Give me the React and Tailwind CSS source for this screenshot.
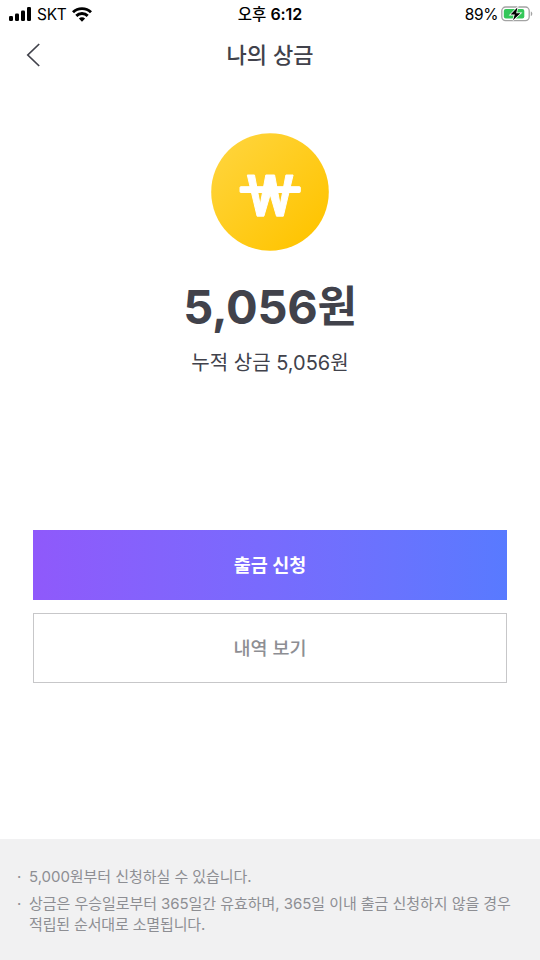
const FONT = "font-['Inter','Noto_Sans_CJK_KR',sans-serif]";

function StatusBar() {
  return (
    <header className="grid h-7 grid-cols-3 items-center text-[16px] leading-7 text-black">
      <div className="flex items-center pl-2">
        <svg className="-mt-px" width="24" height="14" viewBox="0 0 24 14" fill="#000">
          <rect x="1" y="9" width="4" height="5" rx="1.2" />
          <rect x="7" y="6.5" width="4" height="7.5" rx="1.2" />
          <rect x="13" y="3.5" width="4" height="10.5" rx="1.2" />
          <rect x="19" y="0" width="4" height="14" rx="1.2" />
        </svg>
        <span className="ml-[5px] w-[30px] whitespace-nowrap text-[15.5px] tracking-[-0.3px]">SKT</span>
        <svg className="-mt-px ml-[5px]" width="20" height="15" viewBox="0 0 20 15" fill="none" stroke="#000" strokeWidth="2.9">
          <path d="M1 5.3a12.8 12.8 0 0 1 18 0" />
          <path d="M4.3 8.9a8.1 8.1 0 0 1 11.4 0" />
          <path d="M10 14.7 6.9 11.6a4.4 4.4 0 0 1 6.2 0z" fill="#000" stroke="none" />
        </svg>
      </div>
      <div className="whitespace-nowrap text-center text-[15.5px] font-medium">오후 <span className="text-[16px] font-semibold tracking-[-0.1px]">6:12</span></div>
      <div className="flex items-center justify-end pr-[7px]">
        <span className="mr-[3px] whitespace-nowrap text-[15.5px] tracking-[-0.4px]">89%</span>
        <svg className="-mt-px" width="32" height="16" viewBox="0 0 32 16">
          <rect x="0.8" y="1" width="27.4" height="13.6" rx="3.8" fill="#fff" stroke="#a3a3a3" strokeWidth="1.3" />
          <rect x="2.8" y="3" width="20.5" height="9.6" rx="2" fill="#34c759" />
          <path d="M29.8 5.5c2 .7 2 3.9 0 4.6z" fill="#a3a3a3" />
          <path d="M16.4 1.6 9.6 8.6h4.2L12 14.2l7.4-7H15.2z" fill="#000" stroke="#fff" strokeWidth="1.6" paintOrder="stroke" />
        </svg>
      </div>
    </header>
  );
}

function WonCoin() {
  return (
    <svg className="mx-auto block" width="118" height="118" viewBox="0 0 118 118">
      <defs>
        <linearGradient id="coin" x1="0" y1="0" x2="1" y2="1">
          <stop offset="0.1" stopColor="#ffd43a" />
          <stop offset="0.9" stopColor="#ffc400" />
        </linearGradient>
      </defs>
      <circle cx="59" cy="59" r="58.8" fill="url(#coin)" />
      <g fill="#fff" stroke="#fff" strokeWidth="1" strokeLinejoin="round">
        <path d="M36.3 42h7.2L49.2 72 54.8 42h8.8L69.2 72 74.9 42h7.2L72.3 83.2h-6.8L59.2 61.5l-6.3 21.7h-6.8z" />
        <rect x="29" y="53.7" width="60.3" height="5.8" rx="0.8" />
      </g>
    </svg>
  );
}

export default function App() {
  return (
    <div className={`flex h-[960px] w-[540px] flex-col overflow-hidden bg-white text-[#41424b] ${FONT}`}>
      <StatusBar />
      <nav className="grid h-[54px] grid-cols-[80px_1fr_80px] items-center">
        <svg className="ml-[26px]" width="15" height="24" viewBox="0 0 15 24" fill="none" stroke="#41424b" strokeWidth="1.7">
          <path d="M13.2 1 1.8 12l11.4 11" />
        </svg>
        <h1 className="text-center text-[22px] font-medium leading-[54px]">나의 상금</h1>
      </nav>
      <main className="flex flex-1 flex-col pt-[51px]">
        <WonCoin />
        <p className="mt-[26px] h-[60px] whitespace-nowrap text-center text-[47px] font-bold leading-[60px] tracking-[-0.3px]">
          5,056<span className="align-[2px] text-[43px] leading-none">원</span>
        </p>
        <p className="mt-[11px] whitespace-nowrap text-center text-[20px] leading-[30px]">누적 상금 5,056원</p>
        <div className="mt-[152px] flex flex-col gap-[13px] px-[33px]">
          <button className="h-[70px] bg-linear-to-r from-[#8f59fb] to-[#587aff] pt-px text-[18.5px] font-bold text-white">출금 신청</button>
          <button className="h-[70px] border border-[#c7c7c9] bg-white pt-px text-[18.5px] font-medium text-[#8d8e93]">내역 보기</button>
        </div>
      </main>
      <footer className="h-[121px] bg-[#f1f1f2] pl-[17px] pt-[27px] text-[15px] leading-[21.5px] tracking-[-0.05px] text-[#8d8e93]">
        <ul className="flex flex-col gap-[5px]">
          <li className="flex whitespace-nowrap">
            <span className="w-3">·</span>
            <span>5,000원부터 신청하실 수 있습니다.</span>
          </li>
          <li className="flex whitespace-nowrap">
            <span className="w-3">·</span>
            <span>상금은 우승일로부터 365일간 유효하며, 365일 이내 출금 신청하지 않을 경우<br /><span className="tracking-[-0.15px]">적립된 순서대로 소멸됩니다.</span></span>
          </li>
        </ul>
      </footer>
    </div>
  );
}
